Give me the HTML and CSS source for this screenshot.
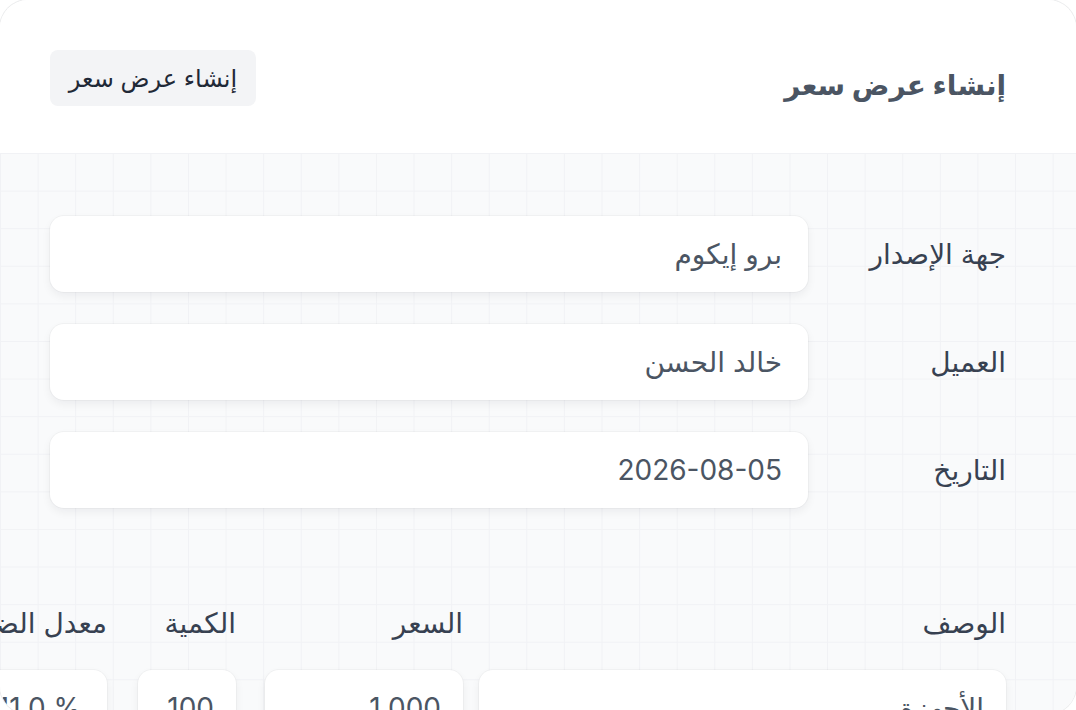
FILE: index.html
```html
<!DOCTYPE html>
<html lang="ar" dir="rtl">
<head>
<meta charset="utf-8">
<title>إنشاء عرض سعر</title>
<link rel="stylesheet" href="styles.css">
</head>
<body>
<div class="card">
  <header class="top">
    <h1 class="title">إنشاء عرض سعر</h1>
    <button class="btn" type="button">إنشاء عرض سعر</button>
  </header>
  <main class="body">
    <section class="fields">
      <div class="field">
        <label class="label">جهة الإصدار</label>
        <div class="input">برو إيكوم</div>
      </div>
      <div class="field">
        <label class="label">العميل</label>
        <div class="input">خالد الحسن</div>
      </div>
      <div class="field">
        <label class="label">التاريخ</label>
        <div class="input">2026-08-05</div>
      </div>
    </section>
    <section class="items">
      <div class="items-row head">
        <div class="col">الوصف</div>
        <div class="col">السعر</div>
        <div class="col">الكمية</div>
        <div class="col">معدل الضريبة</div>
      </div>
      <div class="items-row">
        <div class="col"><div class="cell desc">الأجهزة</div></div>
        <div class="col"><div class="cell price">1,000</div></div>
        <div class="col"><div class="cell qty">100</div></div>
        <div class="col"><div class="cell tax" dir="ltr">11.0 %</div></div>
      </div>
    </section>
  </main>
</div>
</body>
</html>
```
FILE: styles.css
```css
html, body {
  margin: 0;
  padding: 0;
  background: #ffffff;
  overflow: hidden;
}
body {
  font-family: Inter, "DejaVu Sans", sans-serif;
  color: #374151;
}
.card {
  width: 1076px;
  height: 714px;
  border-radius: 28px;
  overflow: hidden;
  background: #ffffff;
  box-shadow: 0 0 0 1px rgba(17, 24, 39, 0.08);
  display: flex;
  flex-direction: column;
}
.top {
  height: 153px;
  flex: none;
  box-sizing: border-box;
  display: flex;
  justify-content: space-between;
  align-items: flex-start;
  padding: 0 70px 0 50px;
  background: #ffffff;
}
.title {
  margin: 60px 0 0;
  font-size: 28px;
  font-weight: 700;
  line-height: 50px;
  color: #4b5563;
}
.btn {
  margin-top: 50px;
  width: 206px;
  height: 56px;
  border: none;
  border-radius: 8px;
  background: #f3f4f6;
  color: #1f2937;
  font-family: inherit;
  font-size: 24px;
  padding: 0;
}
.body {
  flex: 1;
  background-color: #f9fafb;
  background-image:
    linear-gradient(to right, #f1f2f5 1px, transparent 1px),
    linear-gradient(to bottom, #f1f2f5 1px, transparent 1px);
  background-size: 37.6px 37.6px;
  background-position: 0 0;
  padding: 63px 70px 0 50px;
}
.fields {
  display: flex;
  flex-direction: column;
  gap: 32px;
}
.field {
  display: flex;
  align-items: center;
}
.label {
  width: 198px;
  flex: none;
  font-size: 28px;
  color: #374151;
}
.input, .cell {
  box-sizing: border-box;
  height: 76px;
  background: #ffffff;
  border-radius: 14px;
  box-shadow: 0 4px 10px rgba(17, 24, 39, 0.06), 0 0 0 1px rgba(17, 24, 39, 0.03);
  display: flex;
  align-items: center;
  padding: 0 26px;
  font-size: 28px;
  color: #4b5563;
  white-space: nowrap;
}
.input {
  width: 758px;
}
.items {
  margin-top: 92px;
  display: flex;
  flex-direction: column;
  gap: 24px;
}
.items-row {
  display: grid;
  grid-template-columns: 527px 211px 113px 200px;
  column-gap: 16px;
}
.head .col {
  font-size: 28px;
  line-height: 46px;
  color: #374151;
  white-space: nowrap;
}
.cell {
  padding: 0 22px;
}
.desc { width: 527px; }
.price { width: 198px; }
.qty { width: 98px; }
.tax {
  width: 200px;
  justify-content: flex-end;
  padding: 0 26px;
}
```
